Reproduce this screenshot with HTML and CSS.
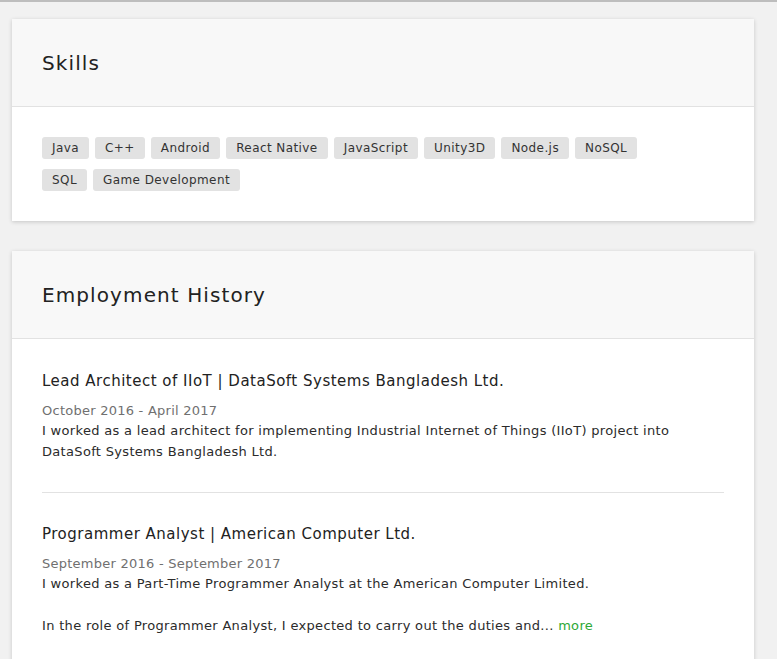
FILE: index.html
```html
<!DOCTYPE html>
<html>
<head>
<meta charset="utf-8">
<link rel="stylesheet" href="styles.css">
</head>
<body>
<div class="page">
  <section class="card">
    <header class="card-header"><h2>Skills</h2></header>
    <div class="card-body">
      <ul class="tags">
        <li>Java</li><li>C++</li><li>Android</li><li>React Native</li><li>JavaScript</li><li>Unity3D</li><li>Node.js</li><li>NoSQL</li><li>SQL</li><li>Game Development</li>
      </ul>
    </div>
  </section>
  <section class="card">
    <header class="card-header"><h2>Employment History</h2></header>
    <div class="card-body jobs">
      <article class="job">
        <h3>Lead Architect of IIoT | DataSoft Systems Bangladesh Ltd.</h3>
        <div class="date">October 2016 - April 2017</div>
        <p>I worked as a lead architect for implementing Industrial Internet of Things (IIoT) project into DataSoft Systems Bangladesh Ltd.</p>
      </article>
      <article class="job">
        <h3>Programmer Analyst | American Computer Ltd.</h3>
        <div class="date">September 2016 - September 2017</div>
        <p>I worked as a Part-Time Programmer Analyst at the American Computer Limited.</p>
        <p class="gap">In the role of Programmer Analyst, I expected to carry out the duties and... <a class="more" href="#">more</a></p>
      </article>
    </div>
  </section>
</div>
</body>
</html>
```
FILE: styles.css
```css
html, body { margin: 0; padding: 0; }
body {
  background: #f1f1f1;
  border-top: 2px solid #bdbdbd;
  font-family: "DejaVu Sans", sans-serif;
  color: #2b2b2b;
}
.page {
  display: flex;
  flex-direction: column;
  gap: 30px;
  padding: 17px 23px 0 12px;
}
.card {
  background: #fff;
  box-shadow: 0 1px 4px rgba(0,0,0,0.18);
}
.card-header {
  background: #f8f8f8;
  border-bottom: 1px solid #e2e2e2;
  height: 87px;
  display: flex;
  align-items: center;
  padding: 0 30px;
}
.card-header h2 {
  margin: 0;
  font-size: 20px;
  font-weight: normal;
  letter-spacing: 1.1px;
  color: #222;
}
.card-body { padding: 30px; }
.tags {
  list-style: none;
  margin: 0;
  padding: 0;
  max-width: 620px;
  display: flex;
  flex-wrap: wrap;
  gap: 10px 6px;
}
.tags li {
  background: #e2e2e2;
  border-radius: 3px;
  padding: 0 10px;
  height: 22px;
  line-height: 22px;
  font-size: 12px;
  letter-spacing: 0.42px;
  color: #333;
}
.jobs { padding-top: 31px; padding-bottom: 0; }
.job { padding-bottom: 30px; }
.job + .job { border-top: 1px solid #e2e2e2; padding-top: 30px; }
.job h3 {
  margin: 0 0 9px;
  font-size: 15px;
  font-weight: normal;
  letter-spacing: 0.5px;
  color: #222;
  line-height: 22px;
}
.date { font-size: 13px; color: #707070; line-height: 19px; letter-spacing: 0.25px; }
.job p { margin: 0; font-size: 13px; line-height: 21px; letter-spacing: 0.32px; color: #2b2b2b; }
.job p.gap { margin-top: 21px; }
.more { color: #2ea836; text-decoration: none; }
```
